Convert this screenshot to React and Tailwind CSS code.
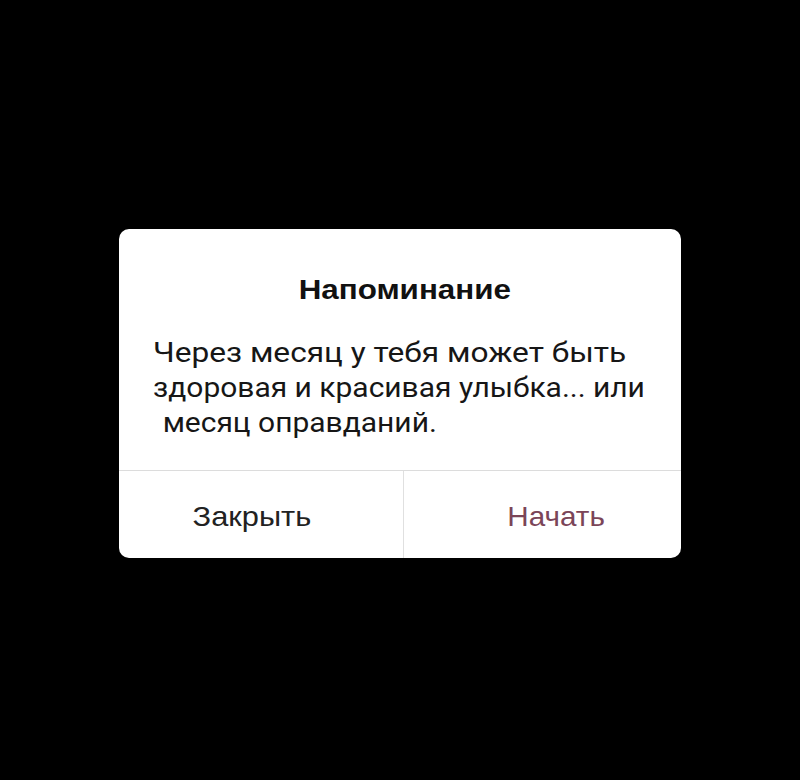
export default function App() {
  return (
    <div className="w-[800px] h-[780px] bg-black flex items-start justify-center pt-[229px]">
      <div className="w-[562px] h-[329px] bg-white rounded-[10px] flex flex-col overflow-hidden">
        <div className="flex-1 flex flex-col">
          <h2 className="mt-[44px] pl-[10px] text-center text-[28px] leading-[34px] font-bold text-[#111] font-['Liberation_Sans',Arial,sans-serif]">
            <span className="inline-block scale-x-[1.12]">Напоминание</span>
          </h2>
          <p className="mt-[28px] pl-[34px] text-[28px] leading-[35px] text-[#161616] font-['Roboto',sans-serif]">
            <span className="block origin-left scale-x-[1.13]">Через месяц у тебя может быть</span>
            <span className="block origin-left scale-x-[1.07]">здоровая и красивая улыбка... или</span>
            <span className="block origin-left scale-x-[1.07] pl-[9px]">месяц оправданий.</span>
          </p>
        </div>
        <div className="h-[88px] border-t border-[#dcdcdc] flex">
          <button className="w-[284px] text-[28px] text-[#222] font-['Liberation_Sans',Arial,sans-serif] pt-[4px]">
            <span className="inline-block scale-x-[1.1] -ml-[18px]">Закрыть</span>
          </button>
          <div className="w-px bg-[#e0e0e0]" />
          <button className="flex-1 text-[28px] text-[#7b4558] font-['Liberation_Sans',Arial,sans-serif] pt-[4px]">
            <span className="inline-block scale-x-[1.06] ml-[28px]">Начать</span>
          </button>
        </div>
      </div>
    </div>
  );
}
